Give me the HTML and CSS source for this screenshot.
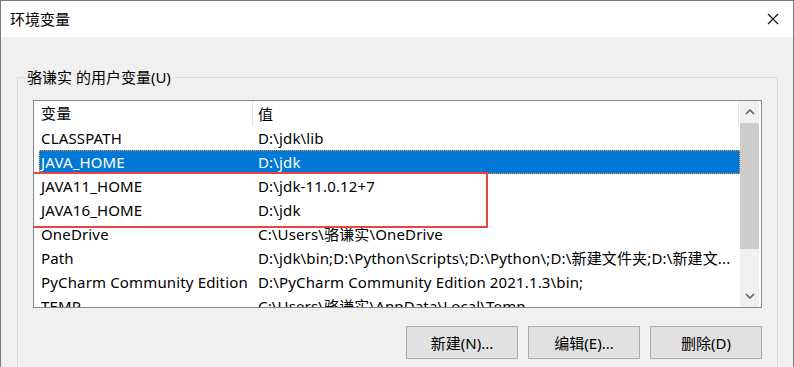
FILE: index.html
```html
<!DOCTYPE html>
<html>
<head>
    <title>环境变量</title>
    <link rel="stylesheet" href="styles.css">
</head>
<body>
    <div class="window">
        <div class="titlebar">
            <span class="title">环境变量</span>
            <span class="close">
                <svg width="12" height="12" viewBox="0 0 12 12"><path d="M1 1 L11 11 M11 1 L1 11" stroke="#111" stroke-width="1.1" fill="none"/></svg>
            </span>
        </div>

        <div class="content">
            <fieldset class="group">
                <legend>骆谦实 的用户变量(U)</legend>

                <div class="list">
                    <div class="list-main">
                        <div class="list-head">
                            <div class="head-name">变量</div>
                            <div class="head-value">值</div>
                        </div>
                        <div class="row"><div class="name">CLASSPATH</div><div class="value">D:\jdk\lib</div></div>
                        <div class="row selected"><div class="name">JAVA_HOME</div><div class="value">D:\jdk</div></div>
                        <div class="row"><div class="name">JAVA11_HOME</div><div class="value">D:\jdk-11.0.12+7</div></div>
                        <div class="row"><div class="name">JAVA16_HOME</div><div class="value">D:\jdk</div></div>
                        <div class="row"><div class="name">OneDrive</div><div class="value">C:\Users\骆谦实\OneDrive</div></div>
                        <div class="row"><div class="name">Path</div><div class="value">D:\jdk\bin;D:\Python\Scripts\;D:\Python\;D:\新建文件夹;D:\新建文...</div></div>
                        <div class="row"><div class="name">PyCharm Community Edition</div><div class="value">D:\PyCharm Community Edition 2021.1.3\bin;</div></div>
                        <div class="row"><div class="name">TEMP</div><div class="value">C:\Users\骆谦实\AppData\Local\Temp</div></div>
                    </div>

                    <div class="scrollbar">
                        <div class="arrow">
                            <svg width="10" height="6" viewBox="0 0 10 6"><path d="M1 5 L5 1 L9 5" stroke="#606060" stroke-width="1.6" fill="none"/></svg>
                        </div>
                        <div class="thumb"></div>
                        <div class="track"></div>
                        <div class="arrow">
                            <svg width="10" height="6" viewBox="0 0 10 6"><path d="M1 1 L5 5 L9 1" stroke="#606060" stroke-width="1.6" fill="none"/></svg>
                        </div>
                    </div>

                    <!-- red highlight drawn over the two JAVA rows -->
                    <div class="mark"></div>
                </div>

                <div class="buttons">
                    <button>新建(N)...</button>
                    <button>编辑(E)...</button>
                    <button>删除(D)</button>
                </div>
            </fieldset>
        </div>
    </div>
</body>
</html>
```

FILE: styles.css
```css
html, body { margin: 0; overflow: hidden; }
body { font-family: "Noto Sans", "Noto Sans CJK SC", sans-serif; font-size: 15px; color: #000; background: #f0f0f0; }

.window { width: 792px; height: 366px; border: 1px solid #7a7a7a; border-bottom: none; background: #f0f0f0; overflow: hidden; }

.titlebar { height: 36px; background: #fff; display: flex; align-items: center; justify-content: space-between; padding: 0 14px 0 9px; }
.title { font-size: 15px; line-height: 20px; }
.close { display: flex; width: 12px; height: 12px; }

.content { padding: 30px 15px 0 16px; }

.group { margin: 0; padding: 13px 15px 0 15px; border: 1px solid #dcdcdc; height: 330px; }
.group legend { padding: 0 2px; margin-left: -8px; line-height: 20px; }

.list { position: relative; display: flex; height: 206px; width: 727px; border: 1px solid #828790; background: #fff; overflow: hidden; letter-spacing: 0.15px; }
.list-main { width: 706px; }

.list-head { display: flex; height: 25px; align-items: center; border-right: 1px solid #e5e5e5; width: 704px; }
.head-name { width: 211px; padding-left: 7px; height: 25px; line-height: 25px; border-right: 1px solid #e5e5e5; }
.head-value { padding-left: 5px; }

.row { display: flex; height: 24px; line-height: 24px; margin-left: 5px; white-space: nowrap; overflow: hidden; }
.row .name { width: 211px; padding-left: 2px; flex: none; }
.row .value { padding-left: 6px; overflow: hidden; }
.row.selected { background: #0078d7; color: #fff; outline: 1px dotted #ff9b2e; outline-offset: -1px; }

.scrollbar { width: 19px; background: #f0f0f0; display: flex; flex-direction: column; }
.arrow { height: 22px; display: flex; align-items: center; justify-content: center; }
.thumb { height: 126px; background: #cdcdcd; }
.track { flex: 1; }

.mark { position: absolute; left: -2px; top: 71px; width: 452px; height: 52px; border: 2px solid #e8453f; }

.buttons { display: flex; justify-content: flex-end; gap: 10px; margin-top: 18px; width: 729px; }
.buttons button { width: 112px; height: 33px; font: inherit; font-size: 15px; background: #e1e1e1; border: 1px solid #adadad; padding: 0; color: #000; }
```
